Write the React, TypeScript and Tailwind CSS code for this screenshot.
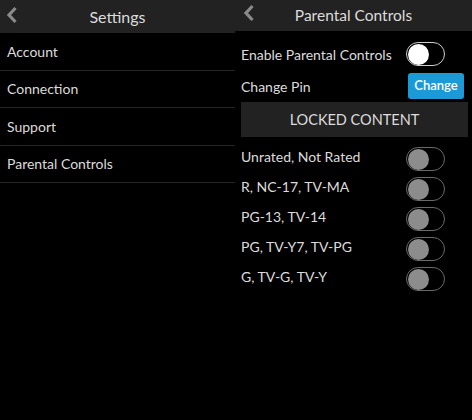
import { useState } from "react"

const ratings = [
  "Unrated, Not Rated",
  "R, NC-17, TV-MA",
  "PG-13, TV-14",
  "PG, TV-Y7, TV-PG",
  "G, TV-G, TV-Y",
]

function Chevron() {
  return (
    <svg width="12" height="18" viewBox="0 0 12 18" className="block">
      <path d="M9.5 2 L3 9 L9.5 16" fill="none" stroke="#8a8a8a" strokeWidth="3.2" />
    </svg>
  )
}

function Toggle({ on, enabled }: { on: boolean; enabled: boolean }) {
  return (
    <div
      className={`w-[39px] h-[24px] rounded-full border flex items-center px-[1px] ${
        enabled ? "border-[#cfcfcf]" : "border-[#6a6a6a]"
      } ${on ? "justify-end" : "justify-start"}`}
    >
      <div className={`w-[21px] h-[21px] rounded-full ${enabled ? "bg-white" : "bg-[#8c8c8c]"}`} />
    </div>
  )
}

export default function App() {
  const [parental, setParental] = useState(false)
  const menu = ["Account", "Connection", "Support", "Parental Controls"]

  return (
    <div className="w-[472px] h-[420px] bg-black flex text-[#dcdcdc] font-['Lato',sans-serif]">
      {/* Settings */}
      <div className="w-[235px] flex flex-col">
        <div className="h-[33px] bg-[#222222] relative flex items-center justify-center">
          <div className="absolute left-[6px] top-[6px]">
            <Chevron />
          </div>
          <span className="text-[16px]">Settings</span>
        </div>
        {menu.map((m) => (
          <div key={m} className="h-[37.5px] border-b border-[#262626] flex items-center px-[7px] text-[14px]">
            {m}
          </div>
        ))}
      </div>

      {/* Parental Controls */}
      <div className="flex-1 flex flex-col">
        <div className="h-[31px] bg-[#222222] relative flex items-center justify-center">
          <div className="absolute left-[8px] top-[4px]">
            <Chevron />
          </div>
          <span className="text-[15.5px]">Parental Controls</span>
        </div>
        <div className="px-[6px] pr-[4px]">
          <div className="flex items-center justify-between h-[24px] mt-[11px] pr-[23px]">
            <span className="text-[14px]">Enable Parental Controls</span>
            <button onClick={() => setParental(!parental)}>
              <Toggle on={parental} enabled />
            </button>
          </div>
          <div className="flex items-center justify-between h-[26px] mt-[7px] pr-[4px]">
            <span className="text-[14px]">Change Pin</span>
            <button className="w-[56px] h-[26px] rounded-[3px] bg-[#1b9ad7] text-white text-[13px] font-semibold">
              Change
            </button>
          </div>
          <div className="h-[35px] mt-[3px] bg-[#222222] flex items-center justify-center text-[14.5px]">
            LOCKED CONTENT
          </div>
          <div className="flex flex-col mt-[7px]">
            {ratings.map((r) => (
              <div key={r} className="h-[30px] flex items-center justify-between pr-[23px]">
                <span className="text-[14px] -mt-[6px]">{r}</span>
                <Toggle on={false} enabled={false} />
              </div>
            ))}
          </div>
        </div>
      </div>
    </div>
  )
}
